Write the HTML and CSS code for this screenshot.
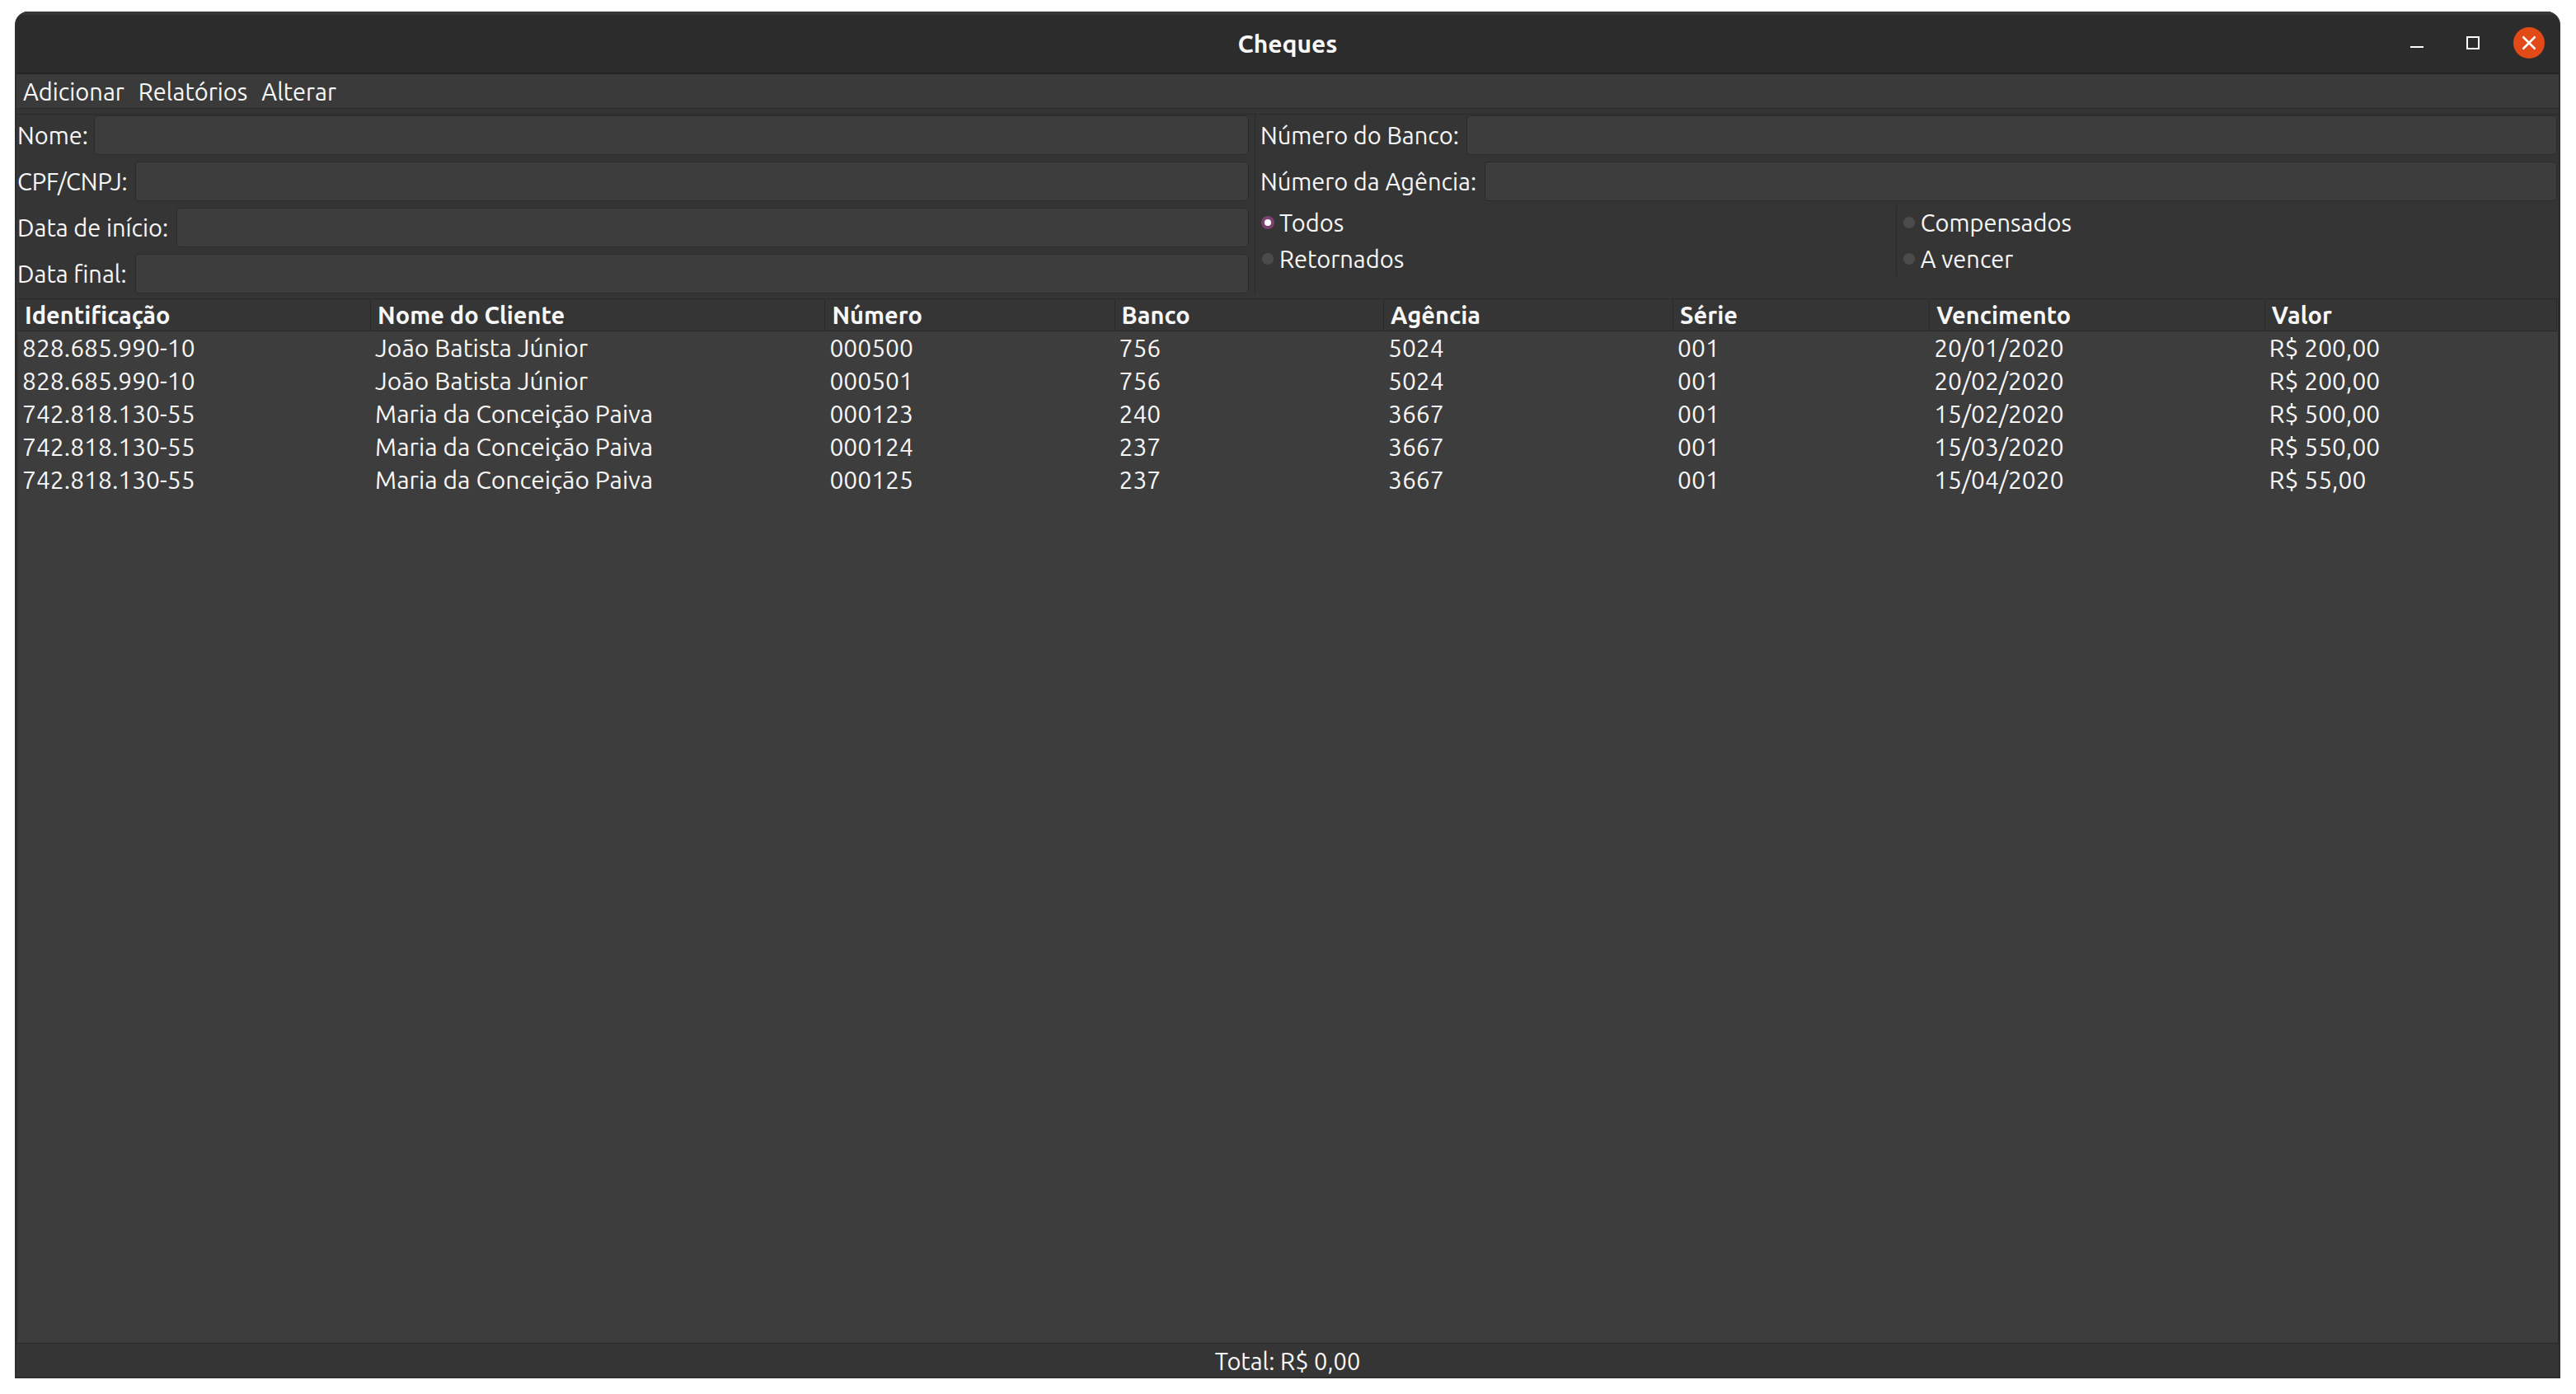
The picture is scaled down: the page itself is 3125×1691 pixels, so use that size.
FILE: index.html
```html
<!DOCTYPE html>
<html lang="pt-BR">
<head>
<meta charset="utf-8">
<title>Cheques</title>
<link rel="stylesheet" href="styles.css">
</head>
<body>
<div class="window">
  <header class="titlebar">
    <h1 class="title">Cheques</h1>
    <div class="controls">
      <button class="control" type="button" aria-label="Minimizar">
        <svg viewBox="0 0 38 38"><path d="M11 24h16" stroke="#fff" stroke-width="2"/></svg>
      </button>
      <button class="control" type="button" aria-label="Maximizar">
        <svg viewBox="0 0 38 38"><path d="M12 12h14v14h-14z" fill="none" stroke="#fff" stroke-width="2"/></svg>
      </button>
      <button class="control close" type="button" aria-label="Fechar">
        <svg viewBox="0 0 38 38"><path d="M11.500 11.500l15 15M26.500 11.500l-15 15" stroke="#fff" stroke-width="2.500"/></svg>
      </button>
    </div>
  </header>
  <nav class="menubar">
    <button class="menu" type="button">Adicionar</button>
    <button class="menu" type="button">Relatórios</button>
    <button class="menu" type="button">Alterar</button>
  </nav>
  <form class="filters">
    <div class="group">
      <div class="field"><label class="label-short" for="nome">Nome:</label><input class="entry" id="nome" type="text"></div>
      <div class="field"><label class="label-medium" for="cpf">CPF/CNPJ:</label><input class="entry" id="cpf" type="text"></div>
      <div class="field"><label class="label-long" for="inicio">Data de início:</label><input class="entry" id="inicio" type="text"></div>
      <div class="field"><label class="label-medium" for="final">Data final:</label><input class="entry" id="final" type="text"></div>
    </div>
    <div class="group-right">
      <div class="group-fields">
        <div class="field"><label class="label-bank" for="banco">Número do Banco:</label><input class="entry" id="banco" type="text"></div>
        <div class="field"><label class="label-agency" for="agencia">Número da Agência:</label><input class="entry" id="agencia" type="text"></div>
      </div>
      <div class="options">
        <div class="option-column">
          <label class="option"><input class="radio" type="radio" name="status" checked>Todos</label>
          <label class="option"><input class="radio" type="radio" name="status">Retornados</label>
        </div>
        <div class="option-column option-second">
          <label class="option"><input class="radio" type="radio" name="status">Compensados</label>
          <label class="option"><input class="radio" type="radio" name="status">A vencer</label>
        </div>
      </div>
    </div>
  </form>
  <main class="list">
    <table class="cheques">
      <colgroup>
        <col class="col-id"><col class="col-client"><col class="col-number"><col class="col-bank">
        <col class="col-agency"><col class="col-series"><col class="col-due"><col class="col-value">
      </colgroup>
      <thead>
        <tr><th>Identificação</th><th>Nome do Cliente</th><th>Número</th><th>Banco</th><th>Agência</th><th>Série</th><th>Vencimento</th><th>Valor</th></tr>
      </thead>
      <tbody>
        <tr><td>828.685.990-10</td><td>João Batista Júnior</td><td>000500</td><td>756</td><td>5024</td><td>001</td><td>20/01/2020</td><td>R$ 200,00</td></tr>
        <tr><td>828.685.990-10</td><td>João Batista Júnior</td><td>000501</td><td>756</td><td>5024</td><td>001</td><td>20/02/2020</td><td>R$ 200,00</td></tr>
        <tr><td>742.818.130-55</td><td>Maria da Conceição Paiva</td><td>000123</td><td>240</td><td>3667</td><td>001</td><td>15/02/2020</td><td>R$ 500,00</td></tr>
        <tr><td>742.818.130-55</td><td>Maria da Conceição Paiva</td><td>000124</td><td>237</td><td>3667</td><td>001</td><td>15/03/2020</td><td>R$ 550,00</td></tr>
        <tr><td>742.818.130-55</td><td>Maria da Conceição Paiva</td><td>000125</td><td>237</td><td>3667</td><td>001</td><td>15/04/2020</td><td>R$ 55,00</td></tr>
      </tbody>
    </table>
  </main>
  <footer class="total">Total: R$ 0,00</footer>
</div>
</body>
</html>
```

FILE: styles.css
```css
* {
  box-sizing: border-box;
}

body {
  margin: 0;
  min-height: 100vh;
  padding: 14px 19px 19px 18px;
  display: flex;
  background: #fff;
  color: #f7f7f7;
  font: 29px/40px Ubuntu, "Noto Sans", sans-serif;
}

button,
input {
  font: inherit;
  color: inherit;
}

.window {
  flex: 1;
  display: flex;
  flex-direction: column;
  background: #353535;
  border: 2px solid #2d2d2d;
  border-top: 0;
  border-radius: 16px 16px 0 0;
  overflow: hidden;
}

/* Title bar */
.titlebar {
  display: grid;
  grid-template-columns: 1fr auto 1fr;
  align-items: center;
  height: 76px;
  background: #2c2c2c;
  border-top: 4px solid #383838;
  border-bottom: 2px solid #232323;
}

.title {
  grid-column: 2;
  margin: 0;
  font-size: 30px;
  line-height: 40px;
  font-weight: 700;
}

.controls {
  display: flex;
  justify-content: flex-end;
  gap: 30px;
  padding: 0 17px 2px 0;
}

.control {
  width: 38px;
  height: 38px;
  padding: 0;
  border: 0;
  border-radius: 50%;
  background: none;
}

.control svg {
  display: block;
}

.close {
  background: #e24a17;
}

/* Menu bar */
.menubar {
  display: flex;
  gap: 17px;
  height: 42px;
  padding: 0 8px;
  background: #3a3a3a;
  border-bottom: 1px solid #2a2a2a;
}

.menu {
  padding: 0;
  border: 0;
  background: none;
}

/* Filters */
.filters {
  display: grid;
  grid-template-columns: 1502px 1fr;
  margin-top: 6px;
  padding-bottom: 6px;
  border-top: 1px solid #2a2a2a;
}

.group,
.group-fields {
  display: flex;
  flex-direction: column;
  gap: 8px;
}

.group {
  padding: 1px 7px 0 1px;
}

.group-right {
  display: flex;
  flex-direction: column;
  gap: 6px;
  padding: 1px 2px 0 6px;
  border-left: 1px solid #2a2a2a;
}

.field {
  display: flex;
  align-items: center;
  height: 48px;
  white-space: nowrap;
}

.entry {
  flex: 1;
  min-width: 0;
  height: 48px;
  padding: 0 8px;
  background: #3d3d3d;
  border: 1px solid #2a2a2a;
  border-radius: 4px;
  outline: 0;
}

.label-short { width: 93px; }
.label-medium { width: 143px; }
.label-long { width: 193px; }
.label-bank { width: 250px; }
.label-agency { width: 272px; }

.options {
  display: grid;
  grid-template-columns: 49% 51%;
}

.option-column {
  display: flex;
  flex-direction: column;
  gap: 4px;
  padding-left: 1px;
}

.option-second {
  padding-left: 7px;
  border-left: 1px solid #2a2a2a;
}

.option {
  display: flex;
  align-items: center;
  gap: 6px;
}

.radio {
  appearance: none;
  width: 16px;
  height: 16px;
  margin: 0;
  border: 1px solid #353535;
  border-radius: 50%;
  background: #4b4b4b;
}

.radio:checked {
  border: 4px solid #7c4270;
  background: #fff;
}

/* Cheque list */
.list {
  flex: 1;
  padding: 0 1px;
  background: #3d3d3d;
  border: 1px solid #2a2a2a;
}

.cheques {
  width: 100%;
  table-layout: fixed;
  border-collapse: separate;
  border-spacing: 0;
  text-align: left;
}

.col-id { width: 13.9%; }
.col-client { width: 17.9%; }
.col-number { width: 11.4%; }
.col-bank { width: 10.6%; }
.col-agency { width: 11.4%; }
.col-series { width: 10.1%; }
.col-due { width: 13.2%; }
.col-value { width: 11.5%; }

.cheques th {
  height: 39px;
  padding: 0 8px;
  background: #353535;
  border-right: 1px solid #2a2a2a;
  border-bottom: 1px solid #2a2a2a;
  line-height: 38px;
}

.cheques td {
  height: 40px;
  padding: 0 5px;
  font-size: 30px;
}

/* Footer */
.total {
  height: 40px;
  padding-top: 3px;
  text-align: center;
  line-height: 37px;
}
```
